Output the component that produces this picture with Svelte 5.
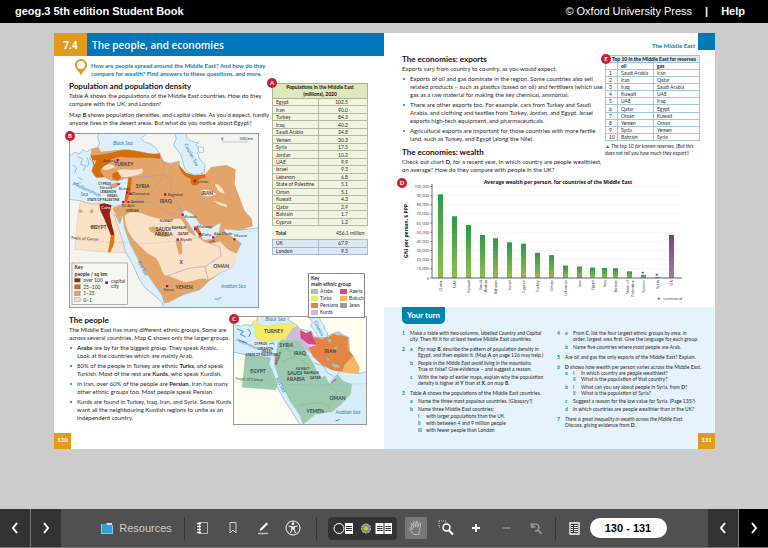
<script>
  const populations = [
    ['Egypt', '102.5'], ['Iran', '90.0'], ['Turkey', '84.3'], ['Iraq', '40.2'],
    ['Saudi Arabia', '34.8'], ['Yemen', '30.3'], ['Syria', '17.5'], ['Jordan', '10.2'],
    ['UAE', '9.9'], ['Israel', '9.3'], ['Lebanon', '6.8'], ['State of Palestine', '5.1'],
    ['Oman', '5.1'], ['Kuwait', '4.3'], ['Qatar', '2.9'], ['Bahrain', '1.7'], ['Cyprus', '1.2']
  ];
  const reserves = [
    ['Saudi Arabia', 'Iran'], ['Iran', 'Qatar'], ['Iraq', 'Saudi Arabia'], ['Kuwait', 'UAE'],
    ['UAE', 'Iraq'], ['Qatar', 'Egypt'], ['Oman', 'Kuwait'], ['Yemen', 'Oman'],
    ['Syria', 'Yemen'], ['Bahrain', 'Syria']
  ];
  // name, centre of the bar, income per person in $1000
  const wealth = [
    [['Qatar'], 38, 91.5], [['UAE'], 52, 67.5], [['Kuwait'], 66, 58], [['Saudi', 'Arabia'], 80, 47],
    [['Bahrain'], 93, 43.5], [['Israel'], 107, 39], [['Cyprus'], 121, 37.5], [['Turkey'], 135, 27.5],
    [['Oman'], 149, 25], [['Lebanon'], 163, 13.5], [['Iran'], 177, 12.5], [['Egypt'], 190, 11.5],
    [['Iraq'], 202, 11], [['Jordan'], 213, 10.7], [['State of', 'Palestine'], 227, 7.3],
    [['Yemen'], 241, 3.4, true], [['Syria'], 255, 1.2, true], [['UK'], 269, 47]
  ];
  const ticks = [0, 10, 20, 30, 40, 50, 60, 70, 80, 90, 100];
  const yOf = (v) => 101 - v * 0.915;

  const leftQuestions = [
    [0, ['1'], 'Make a table with two columns, labelled <i>Country</i> and <i>Capital<br>city</i>. Then fill it for <i>at least</i> twelve Middle East countries.'],
    [4, ['2', 'a'], 'For map <b>B</b>, <i>describe</i> the pattern of population density in<br>Egypt, and then <i>explain</i> it. (Map <b>A</b> on page 126 may help.)'],
    [2, ['', 'b'], '<i>People in the Middle East avoid living in the mountains.</i><br>True or false? Give evidence – and suggest a reason.'],
    [2, ['', 'c'], 'With the help of earlier maps, explain why the population<br>density is higher at <b>Y</b> than at <b>X</b>, on map <b>B</b>.'],
    [4, ['3'], 'Table <b>A</b> shows the populations of the Middle East countries.'],
    [2, ['', 'a'], 'Name the three most <i>populous</i> countries. (Glossary?)'],
    [2, ['', 'b'], 'Name three Middle East countries:'],
    [1, ['', '', 'i'], 'with larger populations than the UK'],
    [1, ['', '', 'ii'], 'with between 4 and 9 million people'],
    [1, ['', '', 'iii'], 'with fewer people than London']
  ];
  const rightQuestions = [
    [0, ['4', 'a'], 'From <b>C</b>, list the four largest ethnic groups by <i>area</i>, in<br>order, largest area first. Give the language for each group.'],
    [2, ['', 'b'], 'Name five countries where most people are Arab.'],
    [4, ['5'], 'Are oil and gas the only exports of the Middle East? Explain.'],
    [4, ['6'], '<b>D</b> shows how wealth per person varies across the Middle East.'],
    [0, ['', 'a', 'i'], 'In which country are people wealthiest?'],
    [0, ['', '', 'ii'], 'What is the population of that country?'],
    [2, ['', 'b', 'i'], 'What can you say about people in Syria, from <b>D</b>?'],
    [0, ['', '', 'ii'], 'What is the population of Syria?'],
    [2, ['', 'c'], 'Suggest a reason for the low value for Syria. (Page 135?)'],
    [2, ['', 'd'], 'In which countries are people wealthier than in the UK?'],
    [4, ['7'], '<i>There is great inequality in wealth across the Middle East.</i><br>Discuss, giving evidence from <b>D</b>.']
  ];
</script>

<div class="app">
  <header class="topbar">
    <h1>geog.3 5th edition Student Book</h1>
    <div class="topright">
      <span>© Oxford University Press</span><span class="bar">|</span><a href="#help">Help</a>
    </div>
  </header>

  <main>
    <article class="spread">
      <section class="page left">
        <div class="unit"><span class="num">7.4</span><h2>The people, and economies</h2></div>
        <div class="intro">
          <svg class="pin" viewBox="0 0 12 17"><path fill="#e09a1c" fill-rule="evenodd" d="M6 0a6 6 0 0 1 6 6c0 4-4.500 6.500-6 10.500C4.500 12.500 0 10 0 6a6 6 0 0 1 6-6Zm0 2a4 4 0 1 0 0 8 4 4 0 0 0 0-8Z" /></svg>
          <p>How are people spread around the Middle East? And how do they<br />compare for wealth? Find answers to these questions, and more.</p>
        </div>

        <div class="upper">
          <div class="uppertext">
            <h3>Population and population density</h3>
            <p>Table <b>A</b> shows the populations of the Middle East countries. How do they<br />compare with the UK, and London?</p>
            <p>Map <b>B</b> shows population densities, and capital cities. As you’d expect, hardly<br />anyone lives in the desert areas. But what do you notice about Egypt?</p>
            <figure class="mapb">
              <span class="badge">B</span>
              <svg viewBox="46 168 570 525">
                <rect x="46" y="168" width="570" height="525" fill="#dceffa" />
                <g fill="#f5f5ef" stroke="#6cb4d9" stroke-width="2">
                  <path d="M40 160H133L130 180 136 195 129 210 108 215 96 222 84 216 76 228 60 224 40 236Z" />
                  <path d="M288 160 272 172 262 182 272 192 292 198 308 212 318 228 240 232 120 226 105 240 118 262 112 280 125 300 150 298 170 308 190 310 222 300 222 330 212 370 200 384 180 388 150 380 110 380 75 370 40 366V700H330L326 680 300 656 275 636 255 606 235 561 215 526 205 490 178 411 186 416 197 440 206 412 212 455 228 500 265 571 300 621 325 656 331 680 345 678 390 655 440 640 465 615 500 590 540 570 550 530 565 500 545 485 520 470 503 445 497 470 478 488 450 490 440 470 432 488 420 462 398 430 385 405 396 398 420 412 440 440 470 455 500 437 510 455 560 460 620 452V160Z" />
                </g>
                <path d="M362 160 368 182 360 202 382 230 390 260 398 282 425 292 452 286 456 262 440 245 432 225 440 214 428 202 435 195 414 190 400 180 395 160Z" fill="#dceffa" stroke="#6cb4d9" stroke-width="2" />
                <path d="M433 206 450 208 452 222 438 226Z" fill="#f5f5ef" stroke="#6cb4d9" stroke-width="2" />
                <path d="M77 372 110 380 150 380 180 388 178 411 205 490 214 528 165 527 60 518 68 430Z" fill="#fbe1c7" stroke="#c9a6c0" stroke-width="1" />
                <path fill="#e2a468" d="M108 232 112 212 132 208 140 222 175 218 210 214 265 222 300 230 318 227 330 250 352 258 378 250 380 270 398 286 425 294 455 290 475 268 520 262 548 275 545 320 560 360 575 400 597 425 600 448 560 460 510 455 500 437 470 455 440 440 420 412 396 398 385 405 398 430 420 462 432 488 440 470 450 490 478 488 497 470 503 445 520 470 545 485 565 500 550 530 540 570 500 590 465 615 440 640 390 655 345 678 331 680 325 656 300 621 265 571 228 500 212 455 206 412 197 440 175 392 200 384 212 370 222 330 222 300 190 310 170 308 150 298 125 300 112 280 118 262Z" />
                <path fill="#fbe1c7" d="M212 416C240 384 290 430 340 426L382 424 395 445 405 465 438 484 452 494 480 500 500 494 508 500C520 520 548 530 553 530L540 570 500 590 465 610C440 598 420 620 390 616L350 600 332 596C320 575 315 545 300 540 275 530 258 505 240 490 225 470 212 450 212 416Z" />
                <path fill="#fbe1c7" d="M180 288C200 262 230 285 262 272 275 282 262 292 242 294 225 300 205 300 195 296ZM143 272C150 255 175 258 184 268 170 270 155 285 143 272ZM442 340C460 330 475 342 490 350 470 362 445 360 442 340ZM486 320C495 318 510 330 515 348 500 350 490 335 486 320ZM480 370 520 382 524 390 500 384Z" />
                <path fill="#d56c10" d="M108 232C150 236 190 216 225 216 265 222 290 232 318 227L320 243C280 236 240 244 200 237 180 240 160 246 170 254 155 262 140 270 138 280L150 298 125 300 112 280 118 262ZM175 288 190 280 202 300 190 310 174 302ZM224 300 233 300 230 340 218 375 210 375ZM376 262 398 286 425 294 455 290 458 300C430 304 425 312 438 316 430 328 410 330 412 304 390 296 378 280 376 262ZM420 450 432 446 448 476 440 482Z" />
                <g fill="#e2a468"><ellipse cx="78" cy="402" rx="6" ry="5" /><ellipse cx="112" cy="402" rx="5" ry="6" /><ellipse cx="118" cy="450" rx="12" ry="6" /><path d="M283 452 300 448 335 464 350 478 325 480 290 464ZM366 492 384 490 387 530 376 534Z" /></g>
                <path fill="#98220f" d="M135 382 150 378 172 384 166 410 172 440 181 474 170 476 150 425 138 400Z" />
                <path fill="#dd7714" d="M170 474 181 474 180 500 168 527 161 526 166 500Z" />
                <g fill="none" stroke="#b596bd" stroke-width="2"><path d="M318 227 332 262 328 292 240 300M328 262 378 250M328 292 355 302 352 350 388 405M250 365 300 335 326 300M215 412 250 368 300 378 350 410 388 412M452 494 500 510 504 538 455 570 465 610M455 570 410 574 330 602" /></g>
                <path d="M46 486 165 496 300 500 616 460" fill="none" stroke="#7aa7bd" stroke-width="1" stroke-dasharray="5 4" />
                <path d="M508 181V192H582V181" fill="none" stroke="#777" stroke-width="1" />
                <path d="M166 324 184 316 200 318 186 330 170 332Z" fill="#e2a468" stroke="#6cb4d9" />
                <g fill="none" stroke="#5aa9d2" stroke-width="2"><path d="M68 236 84 244 78 260 94 264 86 280M54 262 66 270 60 286M98 240 104 256 98 268M70 300 84 306M485 668 505 664 495 672ZM54 320 80 316" /></g>
                <g class="cap"><text x="180" y="264">TURKEY</text><text x="245" y="332">SYRIA</text><text x="318" y="376">IRAQ</text><text x="444" y="352">IRAN</text><text x="318" y="434" class="s">KUWAIT</text><text x="214" y="405" class="s">JORDAN</text><text x="110" y="455">EGYPT</text><text x="306" y="462">SAUDI</text><text x="302" y="477">ARABIA</text><text x="354" y="455" class="s">BAHRAIN</text><text x="372" y="474" class="s">QATAR</text><text x="480" y="573">OMAN</text><text x="366" y="637">YEMEN</text><text x="132" y="323" class="s">CYPRUS</text><text x="138" y="347" class="s">LEBANON</text><text x="158" y="359" class="s">ISRAEL</text><text x="98" y="371" class="s">STATE OF PALESTINE</text><text x="468" y="500" class="s" transform="rotate(-18 468 500)">UAE</text><text x="378" y="562">X</text><text x="116" y="258" fill="#fff">Y</text></g>
                <g class="cap city"><text x="146" y="252">Ankara</text><text x="136" y="335">Nicosia</text><text x="194" y="337">Beirut</text><text x="234" y="352">Damascus</text><text x="342" y="356">Baghdad</text><text x="430" y="316">Tehran</text><text x="202" y="390">Tel Aviv</text><text x="230" y="378">Amman</text><text x="393" y="422">Kuwait</text><text x="432" y="454">Manama</text><text x="446" y="476">Doha</text><text x="482" y="475">Abu Dhabi</text><text x="544" y="481">Muscat</text><text x="380" y="493">Riyadh</text><text x="330" y="644">Sanaa</text><text x="141" y="396" class="light">Cairo</text><text x="48" y="486" transform="rotate(4 48 486)">Tropic of Cancer</text><text x="504" y="185">0</text><text x="560" y="185">500 km</text></g>
                <g class="sea"><text x="176" y="200">Black Sea</text><text x="392" y="200" transform="rotate(62 392 200)">Caspian Sea</text><text x="54" y="322" transform="rotate(24 54 322)">Mediterranean</text><text x="78" y="356">Sea</text><text x="250" y="555" transform="rotate(62 250 555)">Red Sea</text><text x="504" y="636">Arabian Sea</text></g>
                <g fill="#a30e7b"><path d="M187 244h7v7h-7zM190 317h6v6h-6zM216 342h7v7h-7zM226 346h7v7h-7zM331 348h7v7h-7zM421 307h7v7h-7zM204 371h6v6h-6zM220 371h6v6h-6zM384 409h7v7h-7zM422 453h7v7h-7zM437 468h6v7h-6zM477 478h7v7h-7zM541 484h7v7h-7zM369 485h7v7h-7zM337 626h7v7h-7z" /></g>
                <rect x="52" y="559" width="168" height="126" fill="#f6f7f3" stroke="#8b8b8b" stroke-width="2" />
                <g stroke="#555" stroke-width="1"><path fill="#98220f" d="M60 606h17v11h-17z" /><path fill="#d56c10" d="M60 625h17v13h-17z" /><path fill="#e2a468" d="M60 645h17v13h-17z" /><path fill="#fbe1c7" d="M60 664h17v12h-17z" /></g>
                <path fill="#a30e7b" d="M153 615h8v8h-8z" />
                <g class="key"><text x="60" y="578" class="kb">Key</text><text x="60" y="599" class="kb">people / sq km</text><text x="86" y="617">over 100</text><text x="86" y="638">25–100</text><text x="86" y="657">1–25</text><text x="86" y="677">0–1</text><text x="170" y="619">capital</text><text x="170" y="636">city</text></g>
              </svg>
            </figure>
          </div>
          <div class="side">
            <div class="tablewrap">
              <span class="badge">A</span>
              <table class="pop">
                <colgroup><col class="wide" /><col /></colgroup>
                <thead><tr><th colspan="2">Populations in the Middle East<br />(millions), 2020</th></tr></thead>
                <tbody>
                  {#each populations as [name, n]}<tr><td>{name}</td><td>{n}</td></tr>{/each}
                </tbody>
                <tbody class="total"><tr><td><b>Total</b></td><td>456.1 million</td></tr></tbody>
                <tbody class="uk"><tr><td>UK</td><td>67.9</td></tr><tr><td>London</td><td>9.3</td></tr></tbody>
              </table>
            </div>
            <div class="ethnic">
              <b>Key<br />main ethnic group</b>
              <div class="swatches">
                <span><i class="arab"></i>Arabs</span><span><i class="azeri"></i>Azeris</span>
                <span><i class="turk"></i>Turks</span><span><i class="baluch"></i>Baluch</span>
                <span><i class="persian"></i>Persians</span><span><i class="jew"></i>Jews</span>
                <span><i class="kurd"></i>Kurds</span>
              </div>
            </div>
          </div>
        </div>

        <div class="lower">
          <div class="lowertext">
            <h3>The people</h3>
            <p>The Middle East has many different ethnic groups. Some are<br />across several countries. Map <b>C</b> shows only the larger groups.</p>
            <ul>
              <li><b>Arabs</b> are by far the biggest group. They speak Arabic.<br />Look at the countries which are mainly Arab.</li>
              <li>80% of the people in Turkey are ethnic <b>Turks</b>, and speak<br />Turkish. Most of the rest are <b>Kurds</b>, who speak Kurdish.</li>
              <li>In Iran, over 60% of the people are <b>Persian</b>. Iran has many<br />other ethnic groups too. Most people speak Persian.</li>
              <li>Kurds are found in Turkey, Iraq, Iran, and Syria. Some Kurds<br />want all the neighbouring Kurdish regions to unite as an<br />independent country.</li>
            </ul>
          </div>
          <figure class="mapc">
            <span class="badge">C</span>
            <svg viewBox="25 144 399 324">
              <rect x="25" y="144" width="399" height="324" fill="#d8edf9" />
              <g fill="#fffdf0" stroke="#6cb4d9" stroke-width="2">
                <path d="M20 140H94L96 154 84 160 76 170 60 166 46 172 20 166Z" />
                <path d="M196 140 188 152 208 164 225 180 260 188 270 205 310 200 336 190 372 205 374 245 403 295 402 316 430 306V140Z" />
                <path d="M20 250 60 258 110 264 135 268 130 285 145 320 152 350 180 400 200 430 224 470H20Z" />
              </g>
              <path d="M248 140 262 160 256 170 272 190 280 206 306 206 308 192 298 180 300 172 288 158 280 140Z" fill="#d8edf9" stroke="#6cb4d9" stroke-width="2" />
              <path fill="#f6ea6c" stroke="#d3c15b" d="M82 156 95 154 100 168 130 172 165 163 210 165 218 172 200 180 182 210 160 213 140 216 120 219 96 212 86 196 90 180 80 168Z" />
              <path fill="#cdbcdf" d="M218 168 226 185 226 208 245 225 262 236 260 256 238 240 215 215 180 212 200 180Z" />
              <path fill="#d6497f" d="M225 182 242 192 258 186 264 204 277 228 250 226 226 208Z" />
              <path fill="#e58545" d="M264 204 290 210 310 204 330 192 370 205 372 245 386 262 360 290 352 310 322 305 292 290 264 264 250 238 262 232 277 228Z" />
              <path fill="#cdbcdf" d="M322 194 340 186 354 194 340 200Z" />
              <path fill="#f3b767" d="M386 262 404 296 402 316 352 312 360 290Z" />
              <g fill="#9ccbb0" stroke="#7aae93" stroke-width="1">
                <path d="M60 256 110 264 134 268 130 285 145 320 156 348 150 364 50 356Z" />
                <path d="M158 222 170 214 215 215 238 240 250 262 264 284 274 308 290 328 300 322 312 345 326 344 338 318 352 336 380 348 378 376 346 410 322 430 270 438 234 468 224 440 195 398 168 345 148 290 152 262Z" />
                <path d="M306 212 318 210 320 218 312 222ZM328 234 338 236 334 246 326 240ZM304 268 314 272 308 278ZM318 284 340 288 346 298 326 296Z" />
              </g>
              <path fill="#9b9b9b" d="M148 258 156 256 154 286 148 290Z" />
              <g fill="none" stroke="#7d9c8c" stroke-width="1"><path d="M158 250 185 240 205 215M182 244 250 262M168 280 210 262 260 295M222 412 262 404 300 405 308 412 330 390 336 370 312 348M308 412 318 430" /></g>
              <path d="M268 284 296 292 304 310 330 326 344 310" fill="none" stroke="#6cb4d9" stroke-width="2" />
              <path d="M25 340 150 348 424 346" fill="none" stroke="#7aa7bd" stroke-dasharray="5 4" />
              <path d="M34 180 54 188 44 196 60 204M66 180 76 192 70 204M40 214 64 222M130 226 144 222 146 228M332 458 344 454" fill="none" stroke="#2f94cc" stroke-width="3" />
              <g class="cap"><text x="116" y="192">TURKEY</text><text x="162" y="234">SYRIA</text><text x="206" y="258">IRAQ</text><text x="298" y="252">IRAN</text><text x="74" y="314">EGYPT</text><text x="186" y="320">SAUDI</text><text x="184" y="336">ARABIA</text><text x="314" y="396">OMAN</text><text x="244" y="433">YEMEN</text><text x="212" y="303" class="s">KUWAIT</text><text x="236" y="317" class="s">BAHRAIN</text><text x="254" y="332" class="s">QATAR</text><text x="86" y="229" class="s">CYPRUS</text><text x="96" y="243" class="s">LEBANON</text><text x="108" y="252" class="s">ISRAEL</text><text x="60" y="262" class="s">STATE OF PALESTINE</text><text x="154" y="290" class="s" transform="rotate(-70 154 290)">JORDAN</text><text x="320" y="346" class="s" transform="rotate(-40 320 346)">UAE</text></g>
              <g class="cap city"><text x="28" y="334" transform="rotate(3 28 334)">Tropic of Cancer</text></g>
              <g class="sea"><text x="120" y="157">Black Sea</text><text x="266" y="158" transform="rotate(64 266 158)">Caspian</text><text x="30" y="216" transform="rotate(22 30 216)" class="thin">Mediterranean</text><text x="150" y="330" transform="rotate(62 150 330)">Red Sea</text><text x="332" y="437">Arabian Sea</text></g>
            </svg>
          </figure>
        </div>
        <span class="folio">130</span>
      </section>

      <section class="page right">
        <div class="running"><span>The Middle East</span><i></i></div>
        <div class="econ">
          <div class="econtext">
            <h3>The economies: exports</h3>
            <p>Exports vary from country to country, as you would expect.</p>
            <ul>
              <li>Exports of oil and gas dominate in the region. Some countries also sell<br />related products – such as plastics (based on oil) and fertilisers (which use<br />gas as a raw material for making the key chemical, ammonia).</li>
              <li>There are other exports too. For example, cars from Turkey and Saudi<br />Arabia, and clothing and textiles from Turkey, Jordan, and Egypt. Israel<br />exports high-tech equipment, and pharmaceuticals.</li>
              <li>Agricultural exports are important for those countries with more fertile<br />land, such as Turkey, and Egypt (along the Nile).</li>
            </ul>
            <h3 class="second">The economies: wealth</h3>
            <p>Check out chart <b>D</b>, for a recent year. In which country are people wealthiest,<br />on average? How do they compare with people in the UK?</p>
          </div>
          <div class="tablewrap reswrap">
            <span class="badge">E</span>
            <table class="res">
              <colgroup><col class="rank" /><col class="oil" /><col /></colgroup>
              <thead>
                <tr><th colspan="3">Top 10 in the Middle East for reserves</th></tr>
                <tr class="sub"><th></th><th>oil</th><th>gas</th></tr>
              </thead>
              <tbody>
                {#each reserves as [oil, gas], i}<tr><td>{i + 1}</td><td>{oil}</td><td>{gas}</td></tr>{/each}
              </tbody>
            </table>
            <p class="note"><span>▲</span> The top 10 for known reserves. (But this<br />does not tell you how much they export!)</p>
          </div>
        </div>

        <figure class="chart">
          <span class="badge">D</span>
          <svg viewBox="0 0 283 126">
            <defs>
              <linearGradient id="green" x2="0" y2="1"><stop stop-color="#2c9a4a" /><stop offset="1" stop-color="#8fbf4d" /></linearGradient>
              <linearGradient id="plum" x2="0" y2="1"><stop stop-color="#7f3f78" /><stop offset="1" stop-color="#a07bb0" /></linearGradient>
            </defs>
            {#each ticks as t}
              <path d="M29 {yOf(t)}H277" stroke="#e6e6e6" stroke-width="0.5" />
              <path d="M28 {yOf(t)}H30" stroke="#555" stroke-width="0.6" />
              <text x="27" y={yOf(t) + 1.5} text-anchor="end">{t ? t + ',000' : '0'}</text>
            {/each}
            {#each wealth as [name, x, v, est]}
              <rect x={x - 2} y={yOf(v)} width="5" height={v * 0.915} fill={name[0] === 'UK' ? 'url(#plum)' : 'url(#green)'} />
              {#each name as part, k}
                <text text-anchor="end" transform="translate({x + 2 + k * 5 - (name.length - 1) * 2} 103) rotate(-90)">{part}</text>
              {/each}
              {#if est}<text {x} y={yOf(v) - 1} text-anchor="middle">★</text>{/if}
            {/each}
            <path d="M30 7V101H280" fill="none" stroke="#444" stroke-width="0.8" />
            <text class="ctitle" x="156" y="7" text-anchor="middle">Average wealth per person, for countries of the Middle East</text>
            <text class="axis" text-anchor="middle" transform="translate(6 54) rotate(-90)">GNI per person, $ PPP</text>
            <text x="280" y="123" text-anchor="end">★&#160; estimated</text>
          </svg>
        </figure>

        <div class="turn">
          <h3>Your turn</h3>
          <div class="cols">
            {#each [leftQuestions, rightQuestions] as list}
              <div class="qs">
                {#each list as [gap, marks, body]}
                  <div class="q g{gap}">
                    {#each marks as m}<b class="mark">{m}</b>{/each}
                    <span>{@html body}</span>
                  </div>
                {/each}
              </div>
            {/each}
          </div>
          <span class="folio">131</span>
        </div>
      </section>
    </article>
  </main>

  <nav class="toolbar" aria-label="Reader tools">
    <div class="pager">
      <button aria-label="Previous"><svg width="8" height="12" viewBox="0 0 8 12"><path d="M6 1 2 6l4 5" /></svg></button>
      <button aria-label="Next"><svg width="8" height="12" viewBox="0 0 8 12"><path d="m2 1 4 5-4 5" /></svg></button>
    </div>
    <div class="tools">
      <button class="resources">
        <svg width="12" height="11" viewBox="0 0 12 11"><path d="M0 1h5l1 1h6v9H0z" fill="#2f9fd6" /><path d="M5 0h6v2H6z" fill="#cfe6f2" /><path d="M.5 1v9.500h11V2.500" fill="none" stroke="#8cc9e8" /></svg>
        Resources
      </button>
      <i class="sep s1"></i>
      <button class="tool" aria-label="Notes"><svg width="12" height="14" viewBox="0 0 12 14"><path d="M2.500 1.500h8v11h-8z" fill="none" stroke="#b5b5b5" /><path d="M0 2.500h4M0 5.500h4M0 8.500h4M0 11.500h4" stroke="#fff" stroke-width="1.400" /></svg></button>
      <button class="tool" aria-label="Bookmark"><svg width="8" height="12" viewBox="0 0 8 12"><path d="M1 .5h6V11L4 8l-3 3z" fill="none" stroke="#ccc" /></svg></button>
      <button class="tool" aria-label="Highlight"><svg width="12" height="13" viewBox="0 0 12 13"><path d="m2.500 9 1-2.500L9.500.5l1.500 1.500L5 8z" fill="#fff" /><path d="M1 11.500h10" stroke="#bbb" stroke-width="1.500" /></svg></button>
      <button class="tool" aria-label="Accessibility"><svg width="16" height="16" viewBox="0 0 16 16"><circle cx="8" cy="8" r="7" fill="none" stroke="#fff" /><circle cx="8" cy="3.800" r="1.300" fill="#fff" /><path d="M3.500 6 7 6.800V9L5.500 13M12.500 6 9 6.800V9l1.500 4M7 7h2v2H7z" fill="none" stroke="#fff" stroke-width="1" /></svg></button>
      <i class="sep s2"></i>
      <div class="views">
        <button aria-label="Single page"><svg width="20" height="13" viewBox="0 0 20 13"><circle cx="6" cy="6.500" r="5" fill="none" stroke="#fff" /><path d="M12 1h8v11h-8z" fill="#fff" /><path d="M13 4.500h6M13 6.500h6M13 8.500h6" stroke="#333" stroke-width="1" /></svg></button>
        <button aria-label="Double page"><svg width="32" height="13" viewBox="0 0 32 13"><circle cx="6" cy="6.500" r="4.500" fill="#888" stroke="#ddd" stroke-dasharray="2 1" /><path d="M6 4.500v4M4 6.500h4" stroke="#b9e000" stroke-width="2" /><path d="M15.500 1h8v11h-8zM24.500 1h7.500v11h-7.500z" fill="#fff" /><path d="M17 4.500h5.500M17 6.500h5.500M17 8.500h5.500M25.500 4.500H31M25.500 6.500H31M25.500 8.500H31" stroke="#333" /></svg></button>
      </div>
      <button class="tool active" aria-label="Pan"><svg width="16" height="16" viewBox="0 0 16 16"><path d="M5.500 14.500C4 12.500 3 10.500 1.500 9c-.6-.8.3-1.600 1.200-1L4.500 9.500 3 4.300c-.2-1 1-1.300 1.300-.4L6 7.500 5.500 2.300c0-1 1.300-1.100 1.500-.1L7.700 7l.8-5.300c.2-.9 1.400-.7 1.400.2L9.700 7.300l1.700-4c.4-.8 1.500-.4 1.300.5L11.800 9c.1 2-.8 3.500-1.300 5.500z" fill="none" stroke="#bdbdbd" stroke-width=".9" /></svg></button>
      <button class="tool" aria-label="Zoom to area"><svg width="16" height="16" viewBox="0 0 16 16"><path d="M1 1h7v2M1 1v6h2" fill="none" stroke="#ccc" stroke-dasharray="1 1" /><circle cx="8.500" cy="7.500" r="3.500" fill="none" stroke="#fff" stroke-width="1.500" /><path d="m11 10.500 4 4" stroke="#fff" stroke-width="2" /></svg></button>
      <button class="tool" aria-label="Zoom in"><svg width="10" height="10" viewBox="0 0 10 10"><path d="M5 1v8M1 5h8" stroke="#fff" stroke-width="2" /></svg></button>
      <button class="tool" aria-label="Zoom out"><svg width="10" height="10" viewBox="0 0 10 10"><path d="M1 5h8" stroke="#8d8d8d" stroke-width="1.500" /></svg></button>
      <button class="tool" aria-label="Reset zoom"><svg width="12" height="13" viewBox="0 0 12 13"><path d="M1.500 1v4h4M2 4.500a3.500 3.500 0 1 1 3 4.500M8 8l3.500 4" fill="none" stroke="#999" stroke-width="1.500" /></svg></button>
      <i class="sep s3"></i>
      <button class="tool" aria-label="Contents"><svg width="11" height="13" viewBox="0 0 11 13"><path d="M1 1h9v11H1z" fill="#333" stroke="#fff" stroke-width="1.300" /><path d="M2 3.500h2M5 3.500h4M2 5.500h2M5 5.500h4M2 7.500h2M5 7.500h4M2 9.500h2M5 9.500h4" stroke="#fff" /></svg></button>
      <input class="pages" aria-label="Pages" value="130 - 131" />
    </div>
    <div class="pager end">
      <button aria-label="Previous page"><svg width="8" height="12" viewBox="0 0 8 12"><path d="M6 1 2 6l4 5" /></svg></button>
      <button aria-label="Next page"><svg width="8" height="12" viewBox="0 0 8 12"><path d="m2 1 4 5-4 5" /></svg></button>
    </div>
  </nav>
</div>

<style>
  :global(body) { margin: 0; }
  .app { min-height: 100vh; display: flex; flex-direction: column; background: #ccc; font-family: "Liberation Sans", sans-serif; }
  h1, h2, h3, p, ul, figure { margin: 0; padding: 0; }
  button { border: 0; padding: 0; background: none; color: inherit; font: inherit; display: flex; align-items: center; justify-content: center; }
  svg { display: block; }

  .topbar { height: 23px; background: #000; color: #fff; display: flex; align-items: center; justify-content: space-between; padding: 0 23px 0 15px; font-size: 11px; line-height: 23px; }
  .topbar h1 { font-size: 11px; }
  .topright { display: flex; gap: 13px; }
  .topright .bar { font-weight: bold; }
  .topright a { color: #fff; font-weight: bold; text-decoration: none; }

  main { flex: 1; padding: 10px 53px 16px 54px; }
  .spread { display: grid; grid-template-columns: 330px 1fr; background: #fff; color: #2b2b2b; font: 6px/8px Lato, "Open Sans", sans-serif; white-space: nowrap; }
  .page { display: flex; flex-direction: column; min-width: 0; }
  h3 { font-size: 8px; line-height: 11px; color: #111; }
  .unit { display: flex; background: #0078b9; color: #fff; height: 23px; line-height: 24px; font-family: "Open Sans", sans-serif; }
  .unit .num { width: 33px; background: #e09a1c; text-align: center; font-size: 10px; font-weight: 700; }
  .unit h2 { font-size: 10px; font-weight: 600; padding-left: 5px; }
  .intro { display: flex; gap: 4px; padding: 3px 0 0 21px; color: #0a7dbb; font-weight: 700; }
  .intro p { padding-top: 3px; }
  .pin { width: 12px; height: 17px; }

  .upper { display: flex; justify-content: space-between; padding: 3px 16px 0 15px; }
  .upper p { margin-bottom: 3px; }
  .uppertext { width: 190px; }
  .mapb { position: relative; margin-top: 6px; border: 1px solid #999; box-sizing: border-box; }
  .mapb svg, .mapc svg { width: 100%; }
  .badge { position: absolute; left: -5px; top: -3px; z-index: 1; width: 10px; height: 10px; border-radius: 50%; background: #c8202f; color: #fff; font-size: 6px; font-weight: 700; line-height: 10px; text-align: center; }
  .side { width: 96px; display: flex; flex-direction: column; justify-content: space-between; }
  .tablewrap { position: relative; }
  table { border-collapse: collapse; table-layout: fixed; font-size: 5px; line-height: 6px; width: 100%; }
  td, th { padding: 0; }
  .wide { width: 46px; }
  .rank { width: 12px; }
  .oil { width: 36px; }
  .pop { height: 172px; margin-top: 2px; background: #f1f5e1; }
  .pop th { background: #dfe8bb; line-height: 7px; border: 1px solid #aab48c; color: #111; }
  .pop td { border: 1px solid #b4b9a2; padding-left: 3px; }
  .pop td + td { text-align: right; padding-right: 19px; }
  .pop .total tr { height: 13px; }
  .pop .total td { border-width: 0; }
  .pop .total td + td { padding-right: 3px; }
  .pop .uk td { background: #dbe7f5; border-color: #a7b8cf; }
  .ethnic { position: relative; z-index: 2; width: 57px; box-sizing: border-box; align-self: flex-end; margin: 0 3px -10px 0; border: 1px solid #888; background: #fff; padding: 1px 2px; font-size: 5px; line-height: 6px; }
  .swatches { display: grid; grid-template-columns: 29px 1fr; line-height: 7px; margin-top: 1px; }
  .swatches span { display: flex; align-items: center; gap: 2px; }
  .swatches i { width: 7px; height: 5px; }
  .arab { background: #9ccbb0; } .azeri { background: #d6497f; } .turk { background: #f6ea6c; } .baluch { background: #f3b767; }
  .persian { background: #e58545; } .jew { background: #9b9b9b; } .kurd { background: #cdbcdf; }

  .lower { display: flex; justify-content: space-between; padding: 7px 17px 0 15px; }
  .lowertext { width: 160px; }
  ul { list-style: none; }
  li { position: relative; padding-left: 8px; margin-top: 2px; }
  li::before { content: ""; position: absolute; left: 1px; top: 3px; width: 2px; height: 2px; border-radius: 50%; background: #0078b9; }
  .mapc { position: relative; width: 134px; box-sizing: border-box; border: 1px solid #999; margin-top: 1px; align-self: flex-start; }
  .folio { width: 17px; height: 16px; margin-top: auto; background: #e09a1c; color: #fff; font-size: 6px; font-weight: 700; line-height: 13px; text-align: center; }

  .cap { font-size: 15px; font-weight: 700; fill: #444; }
  .cap .s { font-size: 10px; }
  .city { font-size: 12px; font-weight: 400; fill: #333; }
  .light { fill: #fff; }
  .sea { font-size: 15px; font-style: italic; fill: #2a85b5; }
  .thin { font-size: 12px; }
  .key { font-size: 15px; fill: #333; }
  .kb { font-weight: 700; }

  .running { display: flex; justify-content: flex-end; gap: 3px; color: #0a7dbb; font-weight: 700; line-height: 25px; height: 21px; }
  .running i { width: 17px; height: 17px; background: #0078b9; }
  .econ { display: flex; justify-content: space-between; padding: 0 15px 0 18px; }
  .econtext { width: 200px; }
  .econtext h3.second { margin-top: 4px; }
  .reswrap { width: 95px; padding-top: 1px; }
  .reswrap .badge { top: 0; left: -4px; }
  .res { height: 86px; }
  .res th, .res td { border: 1px solid #9fc6e0; text-align: left; padding-left: 3px; }
  .res thead th { background: #dcebf7; padding-left: 3px; text-align: center; color: #111; }
  .res thead .sub th { background: #fff; text-align: left; }
  .note { font-size: 5px; line-height: 7px; font-style: italic; margin-top: 2px; }
  .note span { color: #0078b9; font-style: normal; }

  .chart { position: relative; padding: 3px 30px 0 18px; font-family: "Open Sans", sans-serif; }
  .chart .badge { left: 13px; top: 4px; font-family: Lato, sans-serif; }
  .chart svg { width: 100%; }
  .chart text { font-size: 4px; fill: #333; }
  .chart .ctitle { font-size: 5px; font-weight: 700; fill: #111; }
  .chart .axis { font-size: 5px; font-weight: 700; fill: #111; }

  .turn { flex: 1; display: flex; flex-direction: column; background: #e6f3fc; margin-top: 4px; padding-left: 18px; }
  .turn h3 { align-self: flex-start; width: 43px; background: #0083a8; color: #fff; text-align: center; line-height: 17px; border-radius: 0 0 5px 5px; }
  .cols { display: grid; grid-template-columns: 155px 1fr; margin-top: 6px; font-size: 5px; line-height: 6px; }
  .q { display: flex; }
  .mark { width: 8px; flex: none; color: #0083a8; }
  .g1 { margin-top: 1px; } .g2 { margin-top: 2px; } .g4 { margin-top: 4px; }
  .turn .folio { align-self: flex-end; }

  .toolbar { height: 39px; box-sizing: border-box; background: #505050; border-bottom: 1px solid #777; display: flex; justify-content: space-between; color: #ccc; }
  .pager { display: flex; gap: 1px; background: #777; }
  .pager button { width: 30px; background: #333; }
  .pager path { fill: none; stroke: #fff; stroke-width: 2; }
  .pager.end button + button { background: #000; width: 29px; }
  .tools { display: flex; align-items: center; }
  .resources { gap: 6px; width: 68px; font-size: 11px; }
  .resources svg { flex: none; }
  .sep { width: 1px; height: 23px; background: #333; }
  .s1 { margin: 0 3px 0 13px; }
  .s2 { margin: 0 11px 0 8px; }
  .s3 { margin: 0 4px; }
  .tool { width: 30px; height: 22px; }
  .tool.active { width: 22px; margin: 0 4px; background: #777; border-radius: 2px; }
  .views { display: flex; align-items: center; justify-content: center; gap: 7px; width: 69px; height: 23px; background: #333; border-radius: 4px; margin-right: 4px; }
  .pages { width: 77px; height: 20px; box-sizing: border-box; border: 0; border-radius: 10px; background: #fff; text-align: center; font: bold 11px "Liberation Sans", sans-serif; color: #000; padding: 0; }
</style>
